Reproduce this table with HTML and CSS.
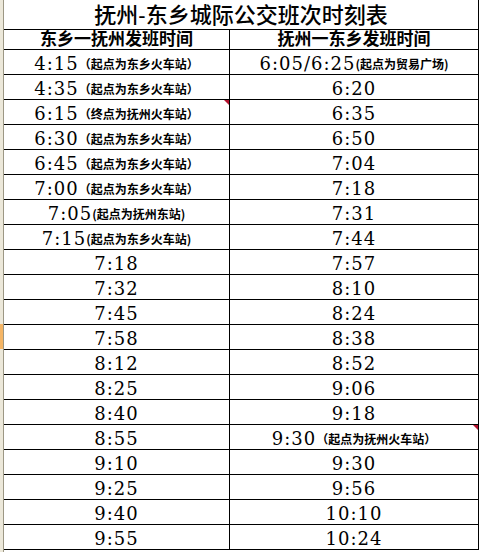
FILE: index.html
```html
<!DOCTYPE html>
<html lang="zh">
<head>
<meta charset="utf-8">
<title>抚州-东乡城际公交班次时刻表</title>
<link rel="stylesheet" href="styles.css">
</head>
<body>
<div class="sheet">
  <div class="rowhead"></div>
  <div class="grid">
    <div class="cell title">抚州-东乡城际公交班次时刻表</div>
    <div class="cell head">东乡一抚州发班时间</div>
    <div class="cell head">抚州一东乡发班时间</div>

    <div class="cell"><span class="t">4:15</span><span class="n">（起点为东乡火车站）</span></div>
    <div class="cell"><span class="t">6:05/6:25</span><span class="n">(起点为贸易广场)</span></div>

    <div class="cell"><span class="t">4:35</span><span class="n">（起点为东乡火车站）</span></div>
    <div class="cell"><span class="t">6:20</span></div>

    <div class="cell"><span class="t">6:15</span><span class="n">（终点为抚州火车站）</span><span class="mark"></span></div>
    <div class="cell"><span class="t">6:35</span></div>

    <div class="cell"><span class="t">6:30</span><span class="n">（起点为东乡火车站）</span></div>
    <div class="cell"><span class="t">6:50</span></div>

    <div class="cell"><span class="t">6:45</span><span class="n">（起点为东乡火车站）</span></div>
    <div class="cell"><span class="t">7:04</span></div>

    <div class="cell"><span class="t">7:00</span><span class="n">（起点为东乡火车站）</span></div>
    <div class="cell"><span class="t">7:18</span></div>

    <div class="cell"><span class="t">7:05</span><span class="n">(起点为抚州东站)</span></div>
    <div class="cell"><span class="t">7:31</span></div>

    <div class="cell"><span class="t">7:15</span><span class="n">(起点为东乡火车站)</span></div>
    <div class="cell"><span class="t">7:44</span></div>

    <div class="cell"><span class="t">7:18</span></div>
    <div class="cell"><span class="t">7:57</span></div>

    <div class="cell"><span class="t">7:32</span></div>
    <div class="cell"><span class="t">8:10</span></div>

    <div class="cell"><span class="t">7:45</span></div>
    <div class="cell"><span class="t">8:24</span></div>

    <div class="cell"><span class="t">7:58</span></div>
    <div class="cell"><span class="t">8:38</span></div>

    <div class="cell"><span class="t">8:12</span></div>
    <div class="cell"><span class="t">8:52</span></div>

    <div class="cell"><span class="t">8:25</span></div>
    <div class="cell"><span class="t">9:06</span></div>

    <div class="cell"><span class="t">8:40</span></div>
    <div class="cell"><span class="t">9:18</span></div>

    <div class="cell"><span class="t">8:55</span></div>
    <div class="cell"><span class="t">9:30</span><span class="n">（起点为抚州火车站）</span><span class="mark"></span></div>

    <div class="cell"><span class="t">9:10</span></div>
    <div class="cell"><span class="t">9:30</span></div>

    <div class="cell"><span class="t">9:25</span></div>
    <div class="cell"><span class="t">9:56</span></div>

    <div class="cell"><span class="t">9:40</span></div>
    <div class="cell"><span class="t">10:10</span></div>

    <div class="cell"><span class="t">9:55</span></div>
    <div class="cell"><span class="t">10:24</span></div>
  </div>
</div>
</body>
</html>
```

FILE: styles.css
```css
html, body {
  margin: 0;
  padding: 0;
  background: #ffffff;
  overflow: hidden;
}

.sheet {
  display: flex;
  width: 480px;
  height: 552px;
  background: #ffffff;
}

.rowhead {
  width: 3px;
  height: 552px;
  flex: none;
  border-right: 1px solid #9c9784;
  background: linear-gradient(to bottom,
    #ece8da 0, #ece8da 324px,
    #f5b565 324px, #f5b565 349px,
    #ece8da 349px);
}

.grid {
  display: grid;
  grid-template-columns: 226px 249px;
  grid-template-rows: 30px 20px repeat(20, 25px);
  flex: none;
}

.cell {
  position: relative;
  box-sizing: border-box;
  border-right: 1px solid #000;
  border-bottom: 1px solid #000;
  text-align: center;
  white-space: nowrap;
  color: #000;
  padding-top: 3px;
  line-height: 22px;
}

.title {
  grid-column: 1 / -1;
  font-family: "Liberation Sans", "Noto Sans CJK SC", sans-serif;
  font-weight: 500;
  font-size: 22px;
  line-height: 26px;
  padding-top: 3px;
}

.head {
  font-family: "Liberation Sans", "Noto Sans CJK SC", sans-serif;
  font-weight: 700;
  font-size: 17px;
  line-height: 18px;
  padding-top: 1px;
}

.t {
  font-family: "DejaVu Serif", "Liberation Serif", serif;
  font-size: 18px;
  letter-spacing: 1px;
}

.n {
  font-family: "Noto Sans CJK SC", sans-serif;
  font-weight: 700;
  font-size: 12px;
  line-height: 12px;
  vertical-align: 1px;
}

.mark {
  position: absolute;
  top: 0;
  right: 0;
  width: 0;
  height: 0;
  border-top: 5px solid #b3112e;
  border-left: 5px solid transparent;
}
```
